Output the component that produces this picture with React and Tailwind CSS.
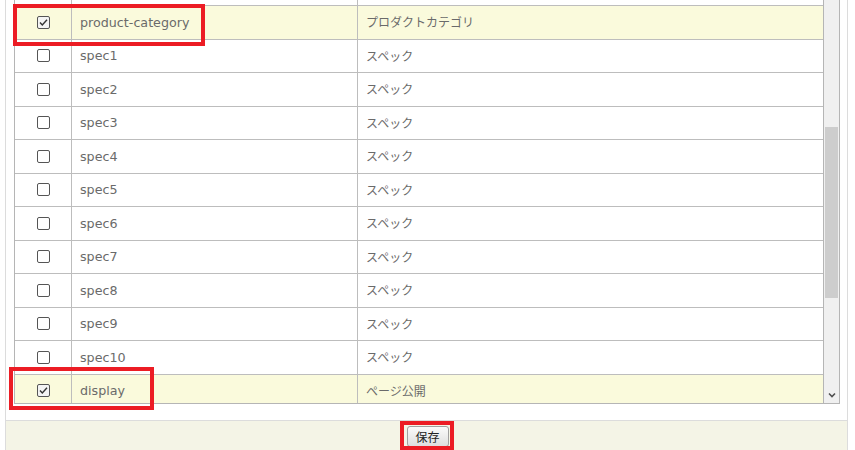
import React from "react";

const rows = [
  { key: "product-category", label: "プロダクトカテゴリ", checked: true },
  ...Array.from({ length: 10 }, (_, i) => ({ key: `spec${i + 1}`, label: "スペック", checked: false })),
  { key: "display", label: "ページ公開", checked: true },
];

function Check({ checked }) {
  return (
    <svg width="13" height="13" viewBox="0 0 13 13">
      <rect x="0.5" y="0.5" width="12" height="12" rx="1.5" fill={checked ? "#f4f4f4" : "#fff"} stroke="#555" />
      {checked && <path d="M3 6.5 L5.3 9 L10 3.8" fill="none" stroke="#333" strokeWidth="1.4" />}
    </svg>
  );
}

function Row({ r }) {
  return (
    <div className={`grid grid-cols-[57px_286px_1fr] h-[33.5px] shrink-0 border-b border-[#bdbdbd] ${r.checked ? "bg-[#fafadc]" : "bg-white"}`}>
      <div className="flex items-center justify-center border-r border-[#bdbdbd] pl-[1px]">
        <Check checked={r.checked} />
      </div>
      <div
        className="flex items-center pl-[8px] border-r border-[#bdbdbd] text-[12.7px]"
        style={{ fontFamily: '"DejaVu Sans", "Noto Sans CJK JP", sans-serif' }}
      >
        {r.key}
      </div>
      <div className="flex items-center pl-[8px] text-[12px]">{r.label}</div>
    </div>
  );
}

export default function App() {
  return (
    <div
      className="relative w-[855px] h-[450px] overflow-hidden bg-white text-[#6a6a6a]"
      style={{ fontFamily: '"Noto Sans CJK JP", "Open Sans", sans-serif' }}
    >
      <div className="ml-[5px] w-[843px] h-full border-l border-r border-[#dcdcdc] flex flex-col">
        <div className="h-[420px] shrink-0 pl-[8px] pr-[7px]">
          <div className="h-[404px] flex border-l border-r border-b border-[#b5b5b5] bg-white">
            <div className="flex-1 overflow-hidden border-r border-[#b5b5b5] flex flex-col">
              <div className="grid grid-cols-[57px_286px_1fr] h-[6px] shrink-0 border-b border-[#bdbdbd]">
                <div className="border-r border-[#bdbdbd]" />
                <div className="border-r border-[#bdbdbd]" />
                <div />
              </div>
              {rows.map((r) => (
                <Row key={r.key} r={r} />
              ))}
            </div>
            <div className="w-[15px] bg-[#f0f0f0] flex flex-col">
              <div className="h-[127px]" />
              <div className="mx-[1px] h-[171px] bg-[#cdcdcd]" />
              <div className="flex-1" />
              <div className="h-[16px] flex items-center justify-center">
                <svg width="8" height="6" viewBox="0 0 8 6">
                  <path d="M1 1.5 L4 4.5 L7 1.5" fill="none" stroke="#505050" strokeWidth="1.6" />
                </svg>
              </div>
            </div>
          </div>
        </div>
        <div className="flex-1 border-t border-[#dcdcdc] bg-[#f4f4e6] flex justify-center pt-[5px]">
          <div className="ml-[2px] w-[42px] h-[21px] border border-[#a0a0a0] rounded-[3px] bg-gradient-to-b from-[#fbfbfb] to-[#dedede] flex items-center justify-center text-[12px] text-[#222]">
            保存
          </div>
        </div>
      </div>

      <div className="absolute left-[13px] top-[4px] w-[192px] h-[42px] border-4 border-[#ec1c24]" />
      <div className="absolute left-[9px] top-[367px] w-[145px] h-[43px] border-4 border-[#ec1c24]" />
      <div className="absolute left-[400px] top-[421px] w-[54px] h-[29px] border-4 border-[#ec1c24]" />
    </div>
  );
}
